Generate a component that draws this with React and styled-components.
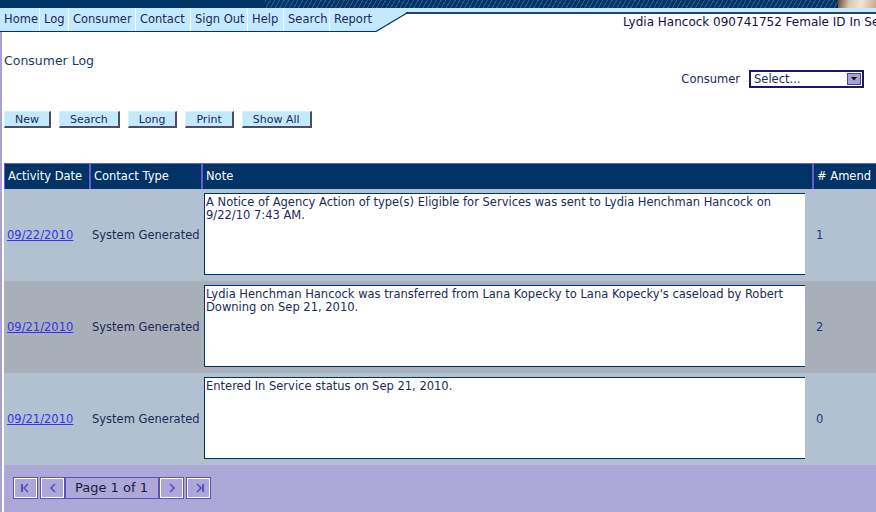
import styled, { createGlobalStyle } from 'styled-components';

const NAVY = '#003366';
const SKY = '#c4e8fc';
const LAVENDER = '#aea8d8';
const PURPLE = '#5e50b8';

const GlobalStyle = createGlobalStyle`
    html, body {
        margin: 0;
        padding: 0;
        overflow: hidden;
        background: #ffffff;
    }
    body {
        font-family: "DejaVu Sans", Verdana, sans-serif;
        font-size: 11.5px;
    }
`

const Page = styled.div`
    height: 512px;
    display: flex;
    flex-direction: column;
`

const Banner = styled.div`
    height: 8px;
    display: flex;
    background-color: ${NAVY};
`

const BannerSolid = styled.div`
    width: 265px;
`

const BannerHatch = styled.div`
    flex: 1;
    background: repeating-linear-gradient(-60deg, ${NAVY} 0px, ${NAVY} 3px, #2d5888 3px, #2d5888 4px);
`

const BannerPhoto = styled.div`
    width: 38px;
    background: linear-gradient(100deg, #6b4a3a 0%, #d9c8b0 30%, #efe6d6 60%, #c9a98c 100%);
`

const NavRow = styled.div`
    height: 24px;
    display: flex;
`

const Tabs = styled.div`
    display: flex;
    background-color: ${SKY};
    border-bottom: 1px solid ${NAVY};
    box-sizing: border-box;
    height: 24px;
`

const Tab = styled.span`
    padding: 0 4px;
    line-height: 23px;
    color: #1a2a5a;
    border-right: 1px solid #ffffff;
    width: ${props => props.w}px;
    box-sizing: border-box;
    white-space: nowrap;
    overflow: hidden;
    &:last-child {
        border-right: none;
    }
`

const NavRight = styled.div`
    flex: 1;
    overflow: hidden;
    white-space: nowrap;
    background: linear-gradient(to bottom, ${SKY} 0 4px, #1d4474 4px 6px, #ffffff 6px);
    padding: 8px 0 0 215px;
    line-height: 13px;
    font-size: 12px;
    color: #1a0c44;
`

const Main = styled.div`
    flex: 1;
    display: flex;
    flex-direction: column;
    border-left: 2px solid #a8a0d8;
    padding-left: 2px;
`

const Title = styled.div`
    margin-top: 22px;
    font-size: 12.5px;
    line-height: 14px;
    color: #1a3a6a;
`

const ConsumerRow = styled.div`
    margin-top: 2px;
    height: 18px;
    display: flex;
    justify-content: flex-end;
    align-items: center;
    gap: 9px;
    padding-right: 12px;
    color: #1a2a5a;
`

const SelectBox = styled.div`
    width: 115px;
    height: 18px;
    box-sizing: border-box;
    border: 2px solid #1a1a60;
    background: #ffffff;
    display: flex;
    align-items: center;
    justify-content: space-between;
    padding-left: 3px;
    color: #1a2a5a;
`

const SelectArrow = styled.span`
    width: 14px;
    height: 12px;
    margin-right: 1px;
    background: #a8a0d8;
    border: 1px solid #4a4a7a;
    box-sizing: border-box;
    display: flex;
    align-items: center;
    justify-content: center;
`

const ButtonRow = styled.div`
    margin-top: 23px;
    display: flex;
    gap: 8px;
`

const Button = styled.button`
    height: 17px;
    padding: 0 10px;
    font-family: inherit;
    font-size: 11px;
    color: #1a2a5a;
    background: ${SKY};
    border: none;
    border-top: 1px solid #d8f0fc;
    border-left: 1px solid #d8f0fc;
    border-right: 2px solid #4e4e62;
    border-bottom: 2px solid #4e4e62;
    line-height: 13px;
    cursor: pointer;
`

const Grid = styled.div`
    margin-top: 35px;
    display: grid;
    grid-template-columns: 85px 112px 611px 1fr;
`

const HeadCell = styled.div`
    height: 26px;
    box-sizing: border-box;
    background: ${NAVY};
    color: #ffffff;
    border-top: 1px solid #6a5acd;
    border-left: ${props => props.first ? '1px' : '2px'} solid #6a5acd;
    padding: 0 3px;
    line-height: 25px;
    white-space: nowrap;
`

const Cell = styled.div`
    height: 92px;
    box-sizing: border-box;
    background: ${props => props.alt ? '#a9afb9' : '#b1c1d1'};
    display: flex;
    align-items: center;
    padding: 0 3px;
    color: #1a2a5a;
    white-space: nowrap;
`

const NoteCell = styled(Cell)`
    padding: 4px 7px 6px 3px;
    align-items: stretch;
`

const AmendCell = styled(Cell)`
    padding-left: 4px;
    color: #1a3a8a;
`

const DateLink = styled.a`
    color: #3333ee;
    text-decoration: underline;
`

const NoteBox = styled.div`
    flex: 1;
    background: #ffffff;
    border: 1px solid ${NAVY};
    border-right: none;
    padding: 2px 1px;
    white-space: normal;
    line-height: 12.5px;
    color: #1a2a5a;
`

const Footer = styled.div`
    flex: 1;
    background: ${LAVENDER};
    padding: 12px 0 0 9px;
`

const Pager = styled.div`
    display: flex;
    align-items: center;
`

const PagerButton = styled.span`
    width: 25px;
    height: 22px;
    box-sizing: border-box;
    border: 1px solid ${PURPLE};
    box-shadow: inset 0 0 0 1px #ffffff;
    display: flex;
    align-items: center;
    justify-content: center;
    margin-right: ${props => props.gap ? '2px' : '0'};
`

const PageLabel = styled.span`
    width: 94px;
    height: 22px;
    box-sizing: border-box;
    border: 1px solid ${PURPLE};
    padding-left: 9px;
    line-height: 20px;
    font-size: 13px;
    color: #1a1a3a;
`

const Chevron = ({ dir, bar }) => (
    <svg width="12" height="12" viewBox="0 0 12 12">
        {dir === 'left'
            ? <polyline points="8,2 4,6 8,10" fill="none" stroke={PURPLE} strokeWidth="1.6" />
            : <polyline points="4,2 8,6 4,10" fill="none" stroke={PURPLE} strokeWidth="1.6" />}
        {bar && (dir === 'left'
            ? <line x1="2" y1="2" x2="2" y2="10" stroke={PURPLE} strokeWidth="2" />
            : <line x1="10" y1="2" x2="10" y2="10" stroke={PURPLE} strokeWidth="2" />)}
    </svg>
)

const tabs = [
    ['Home', 40], ['Log', 29], ['Consumer', 67], ['Contact', 55],
    ['Sign Out', 57], ['Help', 36], ['Search', 46], ['Report', 46],
]

const rows = [
    { date: '09/22/2010', note: 'A Notice of Agency Action of type(s) Eligible for Services was sent to Lydia Henchman Hancock on 9/22/10 7:43 AM.', amend: '1' },
    { date: '09/21/2010', note: "Lydia Henchman Hancock was transferred from Lana Kopecky to Lana Kopecky's caseload by Robert Downing on Sep 21, 2010.", amend: '2' },
    { date: '09/21/2010', note: 'Entered In Service status on Sep 21, 2010.', amend: '0' },
]

const App = () => {
    return (
        <Page>
            <GlobalStyle />
            <Banner>
                <BannerSolid />
                <BannerHatch />
                <BannerPhoto />
            </Banner>
            <NavRow>
                <Tabs>
                    {tabs.map(([label, w]) => <Tab key={label} w={w}>{label}</Tab>)}
                </Tabs>
                <svg width="32" height="24" viewBox="0 0 32 24">
                    <polygon points="0,0 32,0 32,4 0,23" fill={SKY} />
                    <line x1="0" y1="23.5" x2="31" y2="5" stroke={NAVY} strokeWidth="1.2" />
                    <line x1="30" y1="5" x2="32" y2="5" stroke="#1d4474" strokeWidth="2" />
                </svg>
                <NavRight>Lydia Hancock 090741752 Female ID In Service</NavRight>
            </NavRow>
            <Main>
                <Title>Consumer Log</Title>
                <ConsumerRow>
                    <span>Consumer</span>
                    <SelectBox>
                        <span>Select...</span>
                        <SelectArrow>
                            <svg width="6" height="4" viewBox="0 0 6 4">
                                <polygon points="0,0 6,0 3,3.5" fill="#111" />
                            </svg>
                        </SelectArrow>
                    </SelectBox>
                </ConsumerRow>
                <ButtonRow>
                    <Button>New</Button>
                    <Button>Search</Button>
                    <Button>Long</Button>
                    <Button>Print</Button>
                    <Button>Show All</Button>
                </ButtonRow>
                <Grid>
                    <HeadCell first>Activity Date</HeadCell>
                    <HeadCell>Contact Type</HeadCell>
                    <HeadCell>Note</HeadCell>
                    <HeadCell># Amend</HeadCell>
                    {rows.map((r, i) => {
                        const alt = i === 1;
                        return [
                            <Cell key={`d${i}`} alt={alt}><DateLink href="#">{r.date}</DateLink></Cell>,
                            <Cell key={`t${i}`} alt={alt}>System Generated</Cell>,
                            <NoteCell key={`n${i}`} alt={alt}><NoteBox>{r.note}</NoteBox></NoteCell>,
                            <AmendCell key={`a${i}`} alt={alt}>{r.amend}</AmendCell>,
                        ];
                    })}
                </Grid>
                <Footer>
                    <Pager>
                        <PagerButton gap><Chevron dir="left" bar /></PagerButton>
                        <PagerButton><Chevron dir="left" /></PagerButton>
                        <PageLabel>Page 1 of 1</PageLabel>
                        <PagerButton gap><Chevron dir="right" /></PagerButton>
                        <PagerButton><Chevron dir="right" bar /></PagerButton>
                    </Pager>
                </Footer>
            </Main>
        </Page>
    )
}

export default App
